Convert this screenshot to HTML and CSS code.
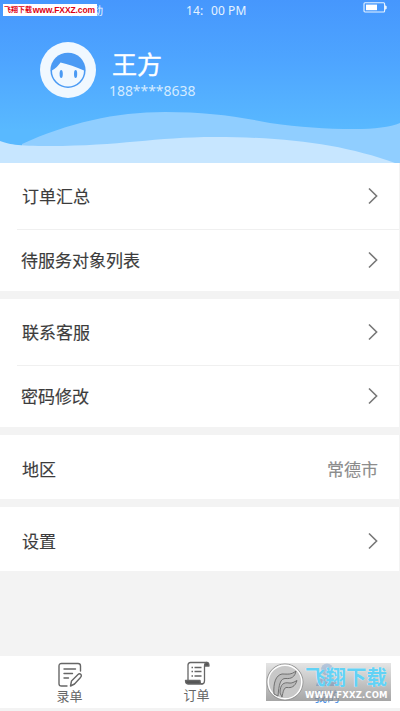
FILE: index.html
```html
<!DOCTYPE html>
<html lang="zh-CN">
<head>
<meta charset="utf-8">
<title>我的</title>
<link rel="stylesheet" href="styles.css">
</head>
<body>
<div class="app">
  <header class="hero">
    <svg class="waves" viewBox="0 0 400 163" preserveAspectRatio="none">
      <path fill="#90ceff" d="M22 144C68 123 115 112 165 112C206 112 235 116 270 123C300 127 325 129 354 129C375 129 390 127 400 123V163H22Z"/>
      <path fill="#c7e6ff" d="M0 141C8 144 16 146 50 146C120 146 155 137 215 137C290 137 345 145 395 163H0Z"/>
    </svg>
    <div class="status">
      <span class="carrier">中国移动</span>
      <span class="time">14<i>:</i>00 PM</span>
      <svg class="battery" viewBox="0 0 24 11"><rect x="1" y=".8" width="20.6" height="9.2" rx="1" fill="none" stroke="#e8f4ff" stroke-width="1.1"/><rect x="3" y="2.6" width="11" height="5.6" fill="#fff"/><path d="M22 3.3l1.7 1v2.4L22 7.7z" fill="#e8f4ff"/></svg>
      <span class="sitemark"><b>飞翔下载</b><b class="url">www.FXXZ.com</b></span>
    </div>
    <div class="profile">
      <svg class="avatar" viewBox="0 0 56 56"><circle cx="28" cy="28" r="28" fill="#f0f8ff"/><circle cx="28" cy="28.3" r="17.6" fill="#4a9af4"/><path fill="#f0f8ff" d="M12 28.500C15 27 19 23 20.500 20.500C28 22 36 25 44 28.500A16 16 0 0 1 12 28.500Z"/><ellipse cx="21.2" cy="32" rx="1.6" ry="4" fill="#4a9af4"/><ellipse cx="35.6" cy="32" rx="1.6" ry="4" fill="#4a9af4"/></svg>
      <div class="who"><h1>王方</h1><p>188****8638</p></div>
    </div>
  </header>
  <main>
    <section class="group">
      <div class="row one"><span>订单汇总</span><svg class="chev" viewBox="0 0 10 18"><path d="M1 1.5L8.6 9L1 16.5"/></svg></div>
      <div class="row two"><span>待服务对象列表</span><svg class="chev" viewBox="0 0 10 18"><path d="M1 1.5L8.6 9L1 16.5"/></svg></div>
    </section>
    <section class="group">
      <div class="row one"><span>联系客服</span><svg class="chev" viewBox="0 0 10 18"><path d="M1 1.5L8.6 9L1 16.5"/></svg></div>
      <div class="row two"><span>密码修改</span><svg class="chev" viewBox="0 0 10 18"><path d="M1 1.5L8.6 9L1 16.5"/></svg></div>
    </section>
    <section class="group">
      <div class="row solo"><span>地区</span><span class="value">常德市</span></div>
    </section>
    <section class="group">
      <div class="row solo"><span>设置</span><svg class="chev" viewBox="0 0 10 18"><path d="M1 1.5L8.6 9L1 16.5"/></svg></div>
    </section>
  </main>
  <nav class="tabs">
    <div class="tab">
      <svg viewBox="0 0 26 26" fill="none" stroke="#666" stroke-width="1.4" stroke-linecap="round" stroke-linejoin="round"><path d="M10 24H4.5Q2 24 2 21.500V4Q2 1.500 4.500 1.500H21Q23.500 1.500 23.500 4V9M7 7H18.500M7 11.500H15.500M7 16H11.500M13.500 24L14.500 19L21 12.500Q22.500 11 24 12.500Q25 14 23.500 15.500L17.500 22Z"/></svg>
      <span>录单</span>
    </div>
    <div class="tab mid">
      <svg viewBox="0 0 26 26" fill="none" stroke="#666" stroke-width="1.3" stroke-linejoin="round"><path d="M4 19V4Q4 1.500 6.500 1.500H23M20.500 5V20Q20.500 23 17.500 23M7.500 6.500H9M10.500 6.500H17.500M7.500 10.500H9M10.500 10.500H17.500M7.500 15H9M10.500 15H17.500"/><path fill="#555" d="M20.500 5Q20.500 1.500 23 1.500Q25 1.500 25 5ZM1.500 19.500H16Q16 23 18 23H4Q1.500 23 1.500 19.500Z"/></svg>
      <span>订单</span>
    </div>
    <div class="tab mine">
      <svg viewBox="0 0 26 26" fill="#4b91e5"><circle cx="13" cy="7.500" r="6"/><path d="M2 24Q3 15 13 15T24 24Z"/></svg>
      <span>我的</span>
    </div>
  </nav>
  <div class="stamp">
    <svg class="seal" viewBox="0 0 38 38"><circle cx="19" cy="19" r="18" fill="#c8c8c8" stroke="#888" stroke-width=".8"/><circle cx="19" cy="19" r="16.800" fill="none" stroke="#fff" stroke-width="1.400"/><path fill="#bbb" stroke="#666" stroke-width=".9" d="M8 31C7 20 10 12 16 11C22 11 25 12 30 8C29 14 25 16 20 15.500C14 15 13 22 12 33ZM14 30C14 21 18 19 23 20C26 20.500 28 19 31 17.500C29 24 25 25 21 24.500C18 24 17 29 16 34Z"/></svg>
    <div class="stamp-text"><b>飞翔下载</b><small>WWW.FXXZ.COM</small></div>
  </div>
</div>
</body>
</html>
```
FILE: styles.css
```css
* { box-sizing: border-box; }
body { margin: 0; font-family: "Noto Sans", "Noto Sans CJK SC", sans-serif; color: #3c3c3c; background: #f3f3f3; }
.app { position: relative; width: 400px; height: 711px; overflow: hidden; display: flex; flex-direction: column; }
.hero { position: relative; height: 163px; flex: none; background: linear-gradient(#4697fd, #4ea5ff 38%, #59b9ff 80%); color: #fff; }
.waves { position: absolute; left: 0; top: 0; width: 400px; height: 163px; }
.status { position: relative; height: 22px; display: flex; font-size: 12px; line-height: 22px; color: #e6f3ff; }
.carrier { width: 186px; flex: none; padding-left: 59px; font-size: 11px; line-height: 22px; white-space: nowrap; }
.time { width: 70px; flex: none; font-size: 12px; letter-spacing: .1px; white-space: nowrap; }
.time i { display: inline-block; width: 11px; font-style: normal; }
.battery { width: 24px; height: 11px; flex: none; margin: 2px 13px 0 auto; }
.sitemark { position: absolute; left: 3px; top: 4px; width: 94px; height: 12px; background: #fff; display: flex; align-items: center; justify-content: space-between; padding: 0 2px 0 1px; color: #e00012; font-size: 7px; line-height: 12px; white-space: nowrap; }
.sitemark .url { font-family: "Liberation Sans", sans-serif; font-size: 8.5px; letter-spacing: -.1px; }
.profile { position: relative; display: flex; padding: 20px 0 0 40px; }
.avatar { width: 56px; height: 56px; }
.who { margin-left: 13px; }
h1 { margin: 4px 0 0 3px; font-size: 25px; font-weight: 400; line-height: 36px; -webkit-text-stroke: .4px #fff; }
.who p { margin: 0; font-size: 14px; line-height: 18px; letter-spacing: -.05px; color: #d4ebff; }
.group { width: 399px; background: #fff; margin-bottom: 8px; }
.row { display: flex; justify-content: space-between; align-items: center; padding: 0 21px 2px 22px; font-size: 17px; -webkit-text-stroke: .15px currentColor; }
.one { height: 67px; position: relative; }
.one::after { content: ""; position: absolute; left: 17px; right: 0; bottom: 0; height: 1px; background: #f0f0f0; }
.two { height: 61px; padding-left: 21px; }
.solo { height: 64px; padding-top: 3px; padding-bottom: 0; }
.value { color: #8c8c8c; }
.chev { width: 10px; height: 18px; fill: none; stroke: #777; stroke-width: 1.6; }
.tabs { margin-top: auto; height: 52px; margin-bottom: 3px; background: #fff; display: flex; }
.tab { width: 139px; display: flex; flex-direction: column; align-items: center; padding-top: 6px; font-size: 13px; line-height: 17px; color: #666; }
.tab svg { width: 26px; height: 26px; flex: none; }
.mid { width: 115px; padding-top: 5px; }
.mine { width: 146px; color: #4b91e5; }
.stamp { position: absolute; left: 266px; top: 663px; width: 125px; height: 38px; display: flex; background: linear-gradient(rgba(220,220,220,.75), rgba(135,135,135,.75)); }
.seal { width: 38px; height: 38px; flex: none; }
.stamp-text { display: flex; flex-direction: column; white-space: nowrap; margin-left: 1px; }
.stamp-text b { font-size: 20.5px; line-height: 28px; margin-top: -.5px; color: #62d2f5; text-shadow: 0 0 1px #fff; }
.stamp-text small { font: bold 8.5px/9px "DejaVu Sans", sans-serif; letter-spacing: .15px; color: #fff; }
```
